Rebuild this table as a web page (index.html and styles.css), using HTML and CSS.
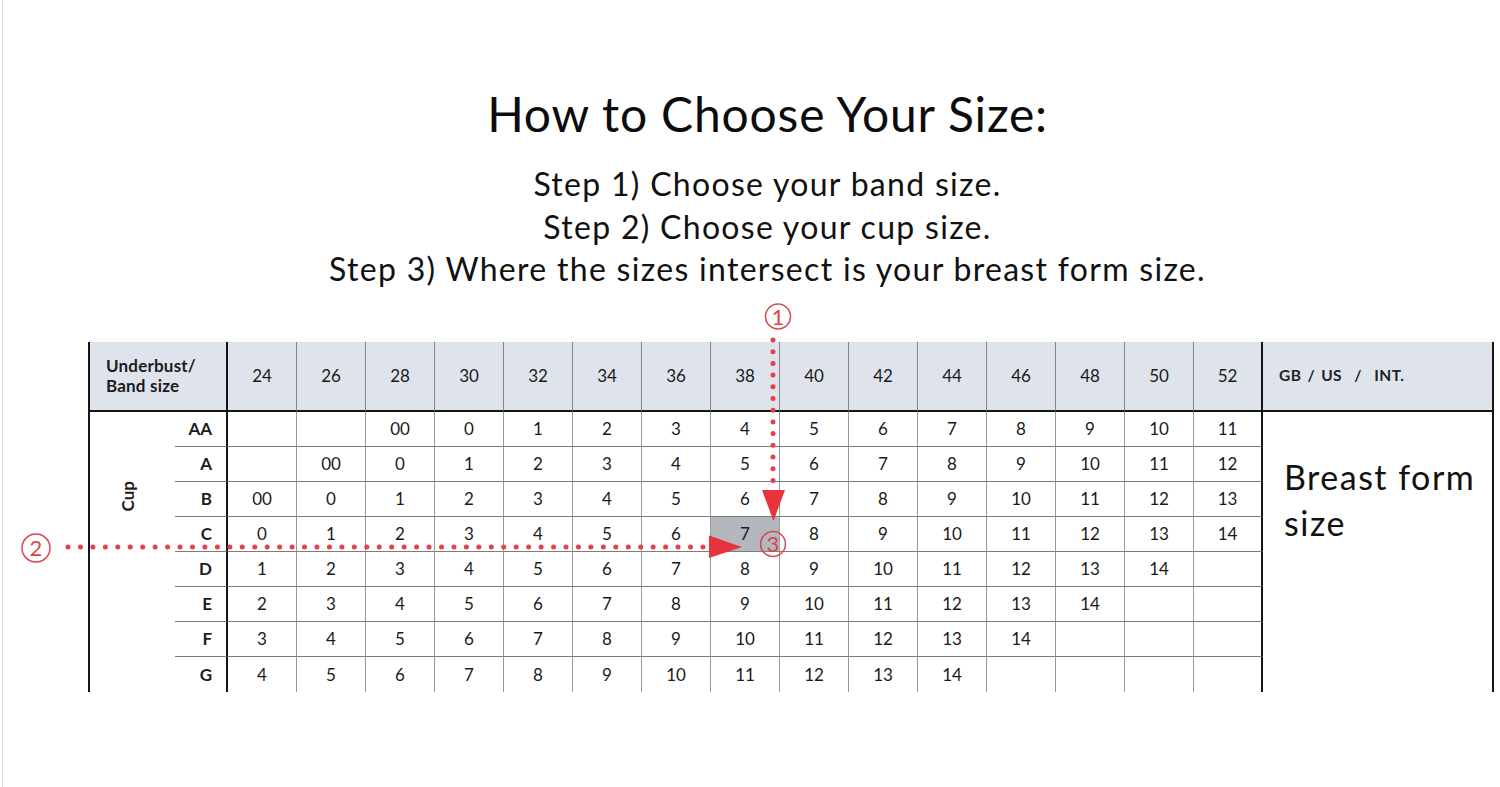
FILE: index.html
```html
<!DOCTYPE html>
<html lang="en">
<head>
<meta charset="utf-8">
<title>How to Choose Your Size</title>
<link rel="stylesheet" href="styles.css">
</head>
<body>
<div class="page">
  <header class="intro">
    <h1 class="title">How to Choose Your Size:</h1>
    <p class="step">Step 1) Choose your band size.</p>
    <p class="step">Step 2) Choose your cup size.</p>
    <p class="step">Step 3) Where the sizes intersect is your breast form size.</p>
  </header>

  <div class="chart">
    <div class="hcell hlabel">Underbust/<br>Band size</div>
    <div class="hcell hnum">24</div><div class="hcell hnum">26</div><div class="hcell hnum">28</div><div class="hcell hnum">30</div><div class="hcell hnum">32</div><div class="hcell hnum">34</div><div class="hcell hnum">36</div><div class="hcell hnum">38</div><div class="hcell hnum">40</div><div class="hcell hnum">42</div><div class="hcell hnum">44</div><div class="hcell hnum">46</div><div class="hcell hnum">48</div><div class="hcell hnum">50</div><div class="hcell hnum hlast">52</div>
    <div class="hcell hright">GB / US &nbsp;/ &nbsp;INT.</div>

    <div class="cup"><span class="cup-text">Cup</span></div>
    <div class="side">
      <span class="side-text">Breast form size</span>
    </div>

    <div class="letter">AA</div>
    <div class="cell"></div><div class="cell"></div><div class="cell">00</div><div class="cell">0</div><div class="cell">1</div><div class="cell">2</div><div class="cell">3</div><div class="cell">4</div><div class="cell">5</div><div class="cell">6</div><div class="cell">7</div><div class="cell">8</div><div class="cell">9</div><div class="cell">10</div><div class="cell last">11</div>

    <div class="letter">A</div>
    <div class="cell"></div><div class="cell">00</div><div class="cell">0</div><div class="cell">1</div><div class="cell">2</div><div class="cell">3</div><div class="cell">4</div><div class="cell">5</div><div class="cell">6</div><div class="cell">7</div><div class="cell">8</div><div class="cell">9</div><div class="cell">10</div><div class="cell">11</div><div class="cell last">12</div>

    <div class="letter">B</div>
    <div class="cell">00</div><div class="cell">0</div><div class="cell">1</div><div class="cell">2</div><div class="cell">3</div><div class="cell">4</div><div class="cell">5</div><div class="cell">6</div><div class="cell">7</div><div class="cell">8</div><div class="cell">9</div><div class="cell">10</div><div class="cell">11</div><div class="cell">12</div><div class="cell last">13</div>

    <div class="letter">C</div>
    <div class="cell">0</div><div class="cell">1</div><div class="cell">2</div><div class="cell">3</div><div class="cell">4</div><div class="cell">5</div><div class="cell">6</div><div class="cell pick">7</div><div class="cell">8</div><div class="cell">9</div><div class="cell">10</div><div class="cell">11</div><div class="cell">12</div><div class="cell">13</div><div class="cell last">14</div>

    <div class="letter">D</div>
    <div class="cell">1</div><div class="cell">2</div><div class="cell">3</div><div class="cell">4</div><div class="cell">5</div><div class="cell">6</div><div class="cell">7</div><div class="cell">8</div><div class="cell">9</div><div class="cell">10</div><div class="cell">11</div><div class="cell">12</div><div class="cell">13</div><div class="cell">14</div><div class="cell last"></div>

    <div class="letter">E</div>
    <div class="cell">2</div><div class="cell">3</div><div class="cell">4</div><div class="cell">5</div><div class="cell">6</div><div class="cell">7</div><div class="cell">8</div><div class="cell">9</div><div class="cell">10</div><div class="cell">11</div><div class="cell">12</div><div class="cell">13</div><div class="cell">14</div><div class="cell"></div><div class="cell last"></div>

    <div class="letter">F</div>
    <div class="cell">3</div><div class="cell">4</div><div class="cell">5</div><div class="cell">6</div><div class="cell">7</div><div class="cell">8</div><div class="cell">9</div><div class="cell">10</div><div class="cell">11</div><div class="cell">12</div><div class="cell">13</div><div class="cell">14</div><div class="cell"></div><div class="cell"></div><div class="cell last"></div>

    <div class="letter lrow">G</div>
    <div class="cell lrow">4</div><div class="cell lrow">5</div><div class="cell lrow">6</div><div class="cell lrow">7</div><div class="cell lrow">8</div><div class="cell lrow">9</div><div class="cell lrow">10</div><div class="cell lrow">11</div><div class="cell lrow">12</div><div class="cell lrow">13</div><div class="cell lrow">14</div><div class="cell lrow"></div><div class="cell lrow"></div><div class="cell lrow"></div><div class="cell lrow last"></div>
  </div>

  <svg class="marks" width="1500" height="787" viewBox="0 0 1500 787" aria-hidden="true">
    <g fill="none" stroke="#e2404a" stroke-linecap="round">
      <line x1="68" y1="547" x2="706" y2="547" stroke-width="5" stroke-dasharray="0 12.45"/>
      <line x1="773" y1="340" x2="773" y2="492" stroke-width="5" stroke-dasharray="0 11.7"/>
    </g>
    <g fill="#e8323c">
      <polygon points="709,535.5 709,558 742,547"/>
      <polygon points="762,490 785,490 773.5,521"/>
    </g>
    <g fill="none" stroke="#d8474f" stroke-width="1.5">
      <circle cx="778" cy="316.5" r="12.5"/>
      <circle cx="36" cy="548" r="14"/>
      <circle cx="773" cy="544" r="12.5"/>
    </g>
    <g fill="#d8474f" font-family="Lato, 'Liberation Sans', sans-serif" font-size="22" font-weight="400" text-anchor="middle">
      <text x="778" y="324.5">1</text>
      <text x="36" y="556">2</text>
      <text x="773" y="552">3</text>
    </g>
  </svg>
</div>
</body>
</html>
```

FILE: styles.css
```css
* { box-sizing: border-box; }

html, body {
  margin: 0;
  padding: 0;
  background: #ffffff;
}

body {
  width: 1500px;
  height: 787px;
  overflow: hidden;
  font-family: Lato, "Liberation Sans", sans-serif;
  color: #111;
}

.page {
  position: relative;
  margin-left: 2px;
  border-left: 1px solid #dedede;
  height: 787px;
}

.intro {
  display: flex;
  flex-direction: column;
  align-items: center;
  padding-top: 86px;
  padding-left: 32px;
}

.title {
  margin: 0;
  font-size: 48px;
  line-height: 55px;
  font-weight: 400;
  letter-spacing: 0.8px;
  color: #0c0c0c;
}

.step {
  margin: 0;
  font-size: 32px;
  line-height: 42.5px;
  letter-spacing: 1.3px;
  color: #111;
}

.title + .step {
  margin-top: 22px;
}

.chart {
  display: grid;
  grid-template-columns: 87px 53px repeat(15, 69px) 231px;
  grid-template-rows: 70px repeat(8, 35px);
  margin-top: 51px;
  margin-left: 85px;
  width: 1406px;
  font-size: 17px;
  color: #1a1a1a;
}

.hcell {
  background: #dfe4ec;
  border-bottom: 2px solid #151515;
  display: flex;
  align-items: center;
}

.hlabel {
  grid-column: 1 / 3;
  border-left: 2px solid #151515;
  border-right: 2px solid #151515;
  padding-left: 16px;
  font-weight: 700;
  line-height: 20px;
  letter-spacing: 0.2px;
  color: #1c1c1c;
}

.hnum {
  justify-content: center;
  border-right: 1px solid #83868c;
}

.hnum.hlast {
  border-right: 2px solid #151515;
}

.hright {
  border-right: 2px solid #151515;
  padding-left: 16px;
  padding-bottom: 2px;
  font-size: 15.5px;
  font-weight: 700;
  word-spacing: 2px;
  letter-spacing: 0.4px;
  color: #222;
}

.cup {
  grid-column: 1;
  grid-row: 2 / 10;
  border-left: 2px solid #151515;
  display: flex;
  justify-content: center;
  align-items: flex-start;
  padding-top: 69px;
  padding-right: 10px;
}

.cup-text {
  writing-mode: vertical-rl;
  transform: rotate(180deg);
  font-size: 17px;
  font-weight: 700;
  color: #1c1c1c;
}

.side {
  grid-column: 18;
  grid-row: 2 / 10;
  border-right: 2px solid #151515;
  padding: 42px 6px 0 21px;
}

.side-text {
  display: block;
  font-size: 34px;
  line-height: 46px;
  letter-spacing: 1.5px;
  color: #111;
}

.letter {
  grid-column: 2;
  border-right: 2px solid #151515;
  border-bottom: 1px solid #7d7d7d;
  display: flex;
  align-items: center;
  justify-content: flex-end;
  padding-right: 14px;
  font-weight: 700;
  color: #1c1c1c;
}

.cell {
  border-right: 1px solid #9a9a9a;
  border-bottom: 1px solid #7d7d7d;
  display: flex;
  align-items: center;
  justify-content: center;
}

.cell.last {
  border-right: 2px solid #151515;
}

.cell.lrow,
.letter.lrow {
  border-bottom: none;
}

.cell.pick {
  background: #b4b7be;
}

.marks {
  position: absolute;
  left: -3px;
  top: 0;
  pointer-events: none;
}
```
